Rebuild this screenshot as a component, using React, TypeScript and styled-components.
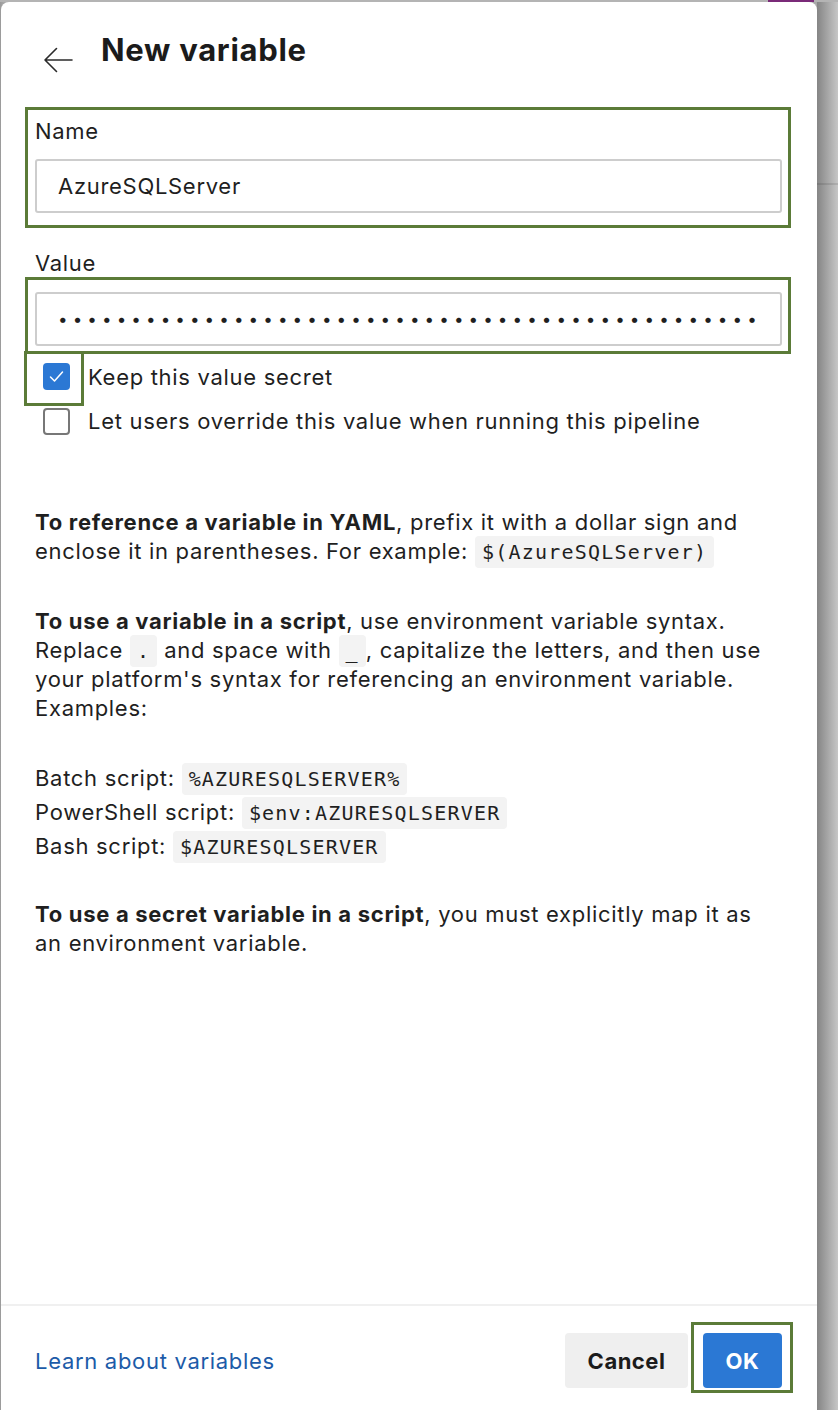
import React from "react";
import styled, { createGlobalStyle } from "styled-components";

const GlobalStyle = createGlobalStyle`
  html, body {
    margin: 0;
    padding: 0;
    background: #a8a8a8;
  }
  body {
    font-family: Inter, "Noto Sans", "Liberation Sans", sans-serif;
    letter-spacing: 0.7px;
    color: #1f1f1f;
  }
  * {
    box-sizing: border-box;
  }
`;

const App: React.FC = () => {
  const secret = "•".repeat(90);

  return (
    <>
      <GlobalStyle />
      <Page>
        <TopEdge>
          <PurpleTab />
        </TopEdge>
        <Stage>
          <Panel>
            <Header>
              <BackButton aria-label="Back">
                <svg width="30" height="26" viewBox="0 0 30 26" fill="none">
                  <path
                    d="M29 13H2M13.5 1.5L2 13l11.5 11.5"
                    stroke="#2b2b2b"
                    strokeWidth="1.6"
                    strokeLinecap="round"
                    strokeLinejoin="round"
                  />
                </svg>
              </BackButton>
              <Title>New variable</Title>
            </Header>

            <Body>
              <Highlight $pad="6px 6px 12px 7px">
                <FieldLabel>Name</FieldLabel>
                <TextInput readOnly value="AzureSQLServer" $top={13} />
              </Highlight>

              <FieldLabel $outside>Value</FieldLabel>
              <Highlight $pad="12px 6px 5px 7px">
                <TextInput readOnly value={secret} $secret />
              </Highlight>

              <CheckRow $framed>
                <CheckFrame>
                  <Checkbox $checked>
                    <svg width="27" height="27" viewBox="0 0 27 27" fill="none">
                      <path
                        d="M7.5 14l4 4 8-9"
                        stroke="#fff"
                        strokeWidth="1.5"
                        strokeLinecap="round"
                        strokeLinejoin="round"
                      />
                    </svg>
                  </Checkbox>
                </CheckFrame>
                <CheckLabel $framed>Keep this value secret</CheckLabel>
              </CheckRow>
              <CheckRow>
                <Checkbox />
                <CheckLabel>Let users override this value when running this pipeline</CheckLabel>
              </CheckRow>

              <Help>
                <Para $space={0}>
                  <strong>To reference a variable in YAML</strong>, prefix it with a dollar sign and
                  <br />
                  enclose it in parentheses. For example: <Code>$(AzureSQLServer)</Code>
                </Para>
                <Para $space={41}>
                  <strong>To use a variable in a script</strong>, use environment variable syntax.
                  <br />
                  Replace <Code>.</Code> and space with <Code>_</Code>, capitalize the letters, and then use
                  <br />
                  your platform's syntax for referencing an environment variable.
                  <br />
                  Examples:
                </Para>
                <Para $space={38}>
                  <ScriptLine>
                    Batch script: <Code>%AZURESQLSERVER%</Code>
                  </ScriptLine>
                  <ScriptLine>
                    PowerShell script: <Code>$env:AZURESQLSERVER</Code>
                  </ScriptLine>
                  <ScriptLine>
                    Bash script: <Code>$AZURESQLSERVER</Code>
                  </ScriptLine>
                </Para>
                <Para $space={37}>
                  <strong>To use a secret variable in a script</strong>, you must explicitly map it as
                  <br />
                  an environment variable.
                </Para>
              </Help>
            </Body>

            <Footer>
              <LearnLink href="#">Learn about variables</LearnLink>
              <Actions>
                <Button>Cancel</Button>
                <ButtonFrame>
                  <Button $primary>OK</Button>
                </ButtonFrame>
              </Actions>
            </Footer>
          </Panel>
          <Backdrop>
            <BackdropRule />
          </Backdrop>
        </Stage>
      </Page>
    </>
  );
};

const Page = styled.div`
  display: flex;
  flex-direction: column;
  width: 838px;
  height: 1410px;
  overflow: hidden;
  background: #a8a8a8;
`;

const TopEdge = styled.div`
  display: flex;
  justify-content: flex-end;
  height: 2px;
  padding-right: 24px;
  background: #b4b4b4;
`;

const PurpleTab = styled.div`
  width: 46px;
  height: 100%;
  background: #7a2a78;
`;

const Stage = styled.div`
  display: flex;
  flex: 1;
  padding-left: 1px;
  background: linear-gradient(to right, #9a9a9a, #a8a8a8 4px);
`;

const Panel = styled.div`
  display: flex;
  flex-direction: column;
  width: 816px;
  background: #ffffff;
  border-radius: 8px 8px 0 0;
`;

const Backdrop = styled.div`
  flex: 1;
  background: linear-gradient(to right, #858585, #c6c6c6);
`;

const BackdropRule = styled.div`
  height: 2px;
  margin-top: 181px;
  background: rgba(0, 0, 0, 0.1);
`;

const Header = styled.div`
  display: flex;
  align-items: flex-start;
  height: 105px;
  padding: 28px 0 0 42px;
`;

const BackButton = styled.button`
  display: flex;
  width: 30px;
  height: 26px;
  margin-top: 17px;
  padding: 0;
  border: none;
  background: none;
`;

const Title = styled.h1`
  margin: 0 0 0 28px;
  font-size: 31px;
  line-height: 40px;
  font-weight: 700;
  letter-spacing: 0.7px;
  color: #1b1b1b;
`;

const Body = styled.div`
  flex: 1;
  padding: 0 35px 0 34px;
`;

const Highlight = styled.div<{ $pad: string }>`
  margin: 0 -9px 0 -10px;
  padding: ${(p) => p.$pad};
  border: 3px solid #5b7b38;
`;

const FieldLabel = styled.div<{ $outside?: boolean }>`
  font-size: 22px;
  line-height: ${(p) => (p.$outside ? "28px" : "30px")};
  margin-top: ${(p) => (p.$outside ? "21px" : "0")};
  color: #1f1f1f;
`;

const TextInput = styled.input<{ $top?: number; $secret?: boolean }>`
  display: block;
  width: 100%;
  height: 54px;
  margin-top: ${(p) => p.$top ?? 0}px;
  padding: 0 21px;
  border: 2px solid #cdcdcd;
  border-radius: 3px;
  outline: none;
  font-family: inherit;
  font-size: ${(p) => (p.$secret ? "17px" : "22px")};
  color: #1f1f1f;
  letter-spacing: ${(p) => (p.$secret ? "5.1px" : "0.7px")};
`;

const CheckRow = styled.div<{ $framed?: boolean }>`
  display: flex;
  align-items: ${(p) => (p.$framed ? "flex-start" : "center")};
  height: ${(p) => (p.$framed ? "52px" : "30px")};
  margin-left: ${(p) => (p.$framed ? "-11px" : "8px")};
`;

const CheckFrame = styled.div`
  margin-top: -3px;
  padding: 9px 11px 13px 16px;
  border: 3px solid #5b7b38;
`;

const Checkbox = styled.span<{ $checked?: boolean }>`
  display: flex;
  width: 27px;
  height: 27px;
  border-radius: 4px;
  background: ${(p) => (p.$checked ? "#2b78d4" : "#ffffff")};
  border: ${(p) => (p.$checked ? "none" : "2px solid #777777")};
`;

const CheckLabel = styled.span<{ $framed?: boolean }>`
  margin: ${(p) => (p.$framed ? "8px 0 0 4px" : "0 0 0 18px")};
  font-size: 22px;
  line-height: 30px;
  color: #1f1f1f;
`;

const Help = styled.div`
  margin: 72px -30px 0 0;
  font-size: 22px;
  line-height: 29px;
  color: #1f1f1f;

  strong {
    font-weight: 700;
  }
`;

const Para = styled.div<{ $space: number }>`
  margin-top: ${(p) => p.$space}px;
`;

const ScriptLine = styled.div`
  line-height: 34px;
`;

const Code = styled.code`
  padding: 4px 7px;
  border-radius: 4px;
  background: #f3f3f3;
  font-family: "DejaVu Sans Mono", "Liberation Mono", monospace;
  font-size: 20px;
  line-height: 1;
  letter-spacing: 1.2px;
  color: #1f1f1f;
`;

const Footer = styled.div`
  display: flex;
  justify-content: space-between;
  align-items: flex-start;
  height: 106px;
  padding: 16px 35px 0 34px;
  border-top: 2px solid #f0f0f0;
`;

const LearnLink = styled.a`
  margin-top: 24px;
  font-size: 22px;
  line-height: 30px;
  color: #1c5ba8;
  text-decoration: none;
`;

const Actions = styled.div`
  display: flex;
  align-items: flex-start;
`;

const ButtonFrame = styled.div`
  margin: 0 -11px 0 3px;
  padding: 8px 8px 2px 9px;
  border: 3px solid #5b7b38;
`;

const Button = styled.button<{ $primary?: boolean }>`
  height: 55px;
  margin-top: ${(p) => (p.$primary ? "0" : "11px")};
  padding: 0;
  width: ${(p) => (p.$primary ? "79px" : "123px")};
  border: none;
  border-radius: 4px;
  background: ${(p) => (p.$primary ? "#2b78d4" : "#efefef")};
  color: ${(p) => (p.$primary ? "#ffffff" : "#1b1b1b")};
  font-family: inherit;
  font-size: 22px;
  font-weight: 700;
  letter-spacing: 0.5px;
`;

export default App;
